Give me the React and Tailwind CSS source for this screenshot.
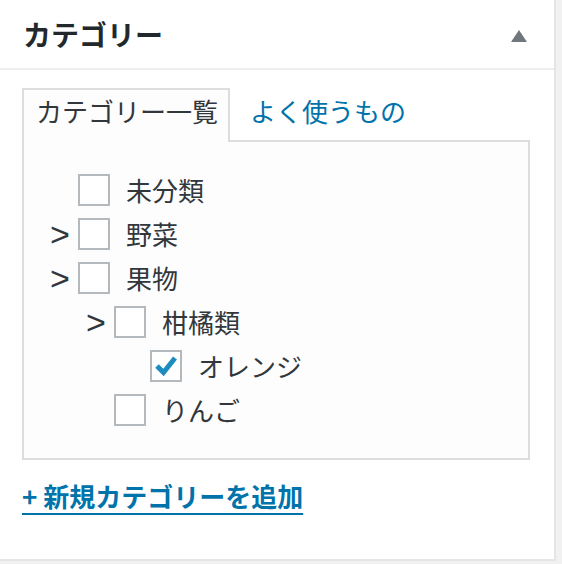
import React from "react";

const font = { fontFamily: '"Noto Sans CJK JP", "Noto Sans", sans-serif' };

const items = [
  { label: "未分類", level: 0, arrow: false, checked: false },
  { label: "野菜", level: 0, arrow: true, checked: false },
  { label: "果物", level: 0, arrow: true, checked: false },
  { label: "柑橘類", level: 1, arrow: true, checked: false },
  { label: "オレンジ", level: 2, arrow: false, checked: true },
  { label: "りんご", level: 1, arrow: false, checked: false },
];

const spacers = ["w-[26px]", "w-[62px]", "w-[98px]"];

const Checkbox = ({ checked }) => (
  <span className="flex h-[32px] w-[32px] shrink-0 items-center justify-center border-2 border-[#b4b9be] bg-white">
    {checked && (
      <svg width="28" height="28" viewBox="0 0 28 28">
        <polyline points="5,14 11.5,20.5 23,6" fill="none" stroke="#1e8cbe" strokeWidth="5" />
      </svg>
    )}
  </span>
);

const CategoryRow = ({ item }) => (
  <li className="flex h-[44px] items-center">
    <span className={spacers[item.level] + " shrink-0"} />
    <span className="w-[28px] shrink-0 text-[34px] leading-none text-[#32373c] [font-family:'Liberation_Sans',sans-serif]">
      {item.arrow ? ">" : ""}
    </span>
    <Checkbox checked={item.checked} />
    <span className="ml-[16px] text-[26px] leading-[36px] text-[#32373c]">{item.label}</span>
  </li>
);

export default function App() {
  return (
    <div className="h-[564px] w-full bg-[#f1f1f1]" style={font}>
      <div className="h-[561px] w-[556px] border-b-2 border-r-2 border-[#e5e5e5] bg-white">
        {/* header */}
        <div className="flex h-[70px] items-center justify-between border-b-2 border-[#eeeeee] pl-[23px] pr-[27px]">
          <h2 className="text-[28px] font-bold leading-[36px] text-[#23282d]">カテゴリー</h2>
          <svg className="mt-[4px]" width="16" height="12" viewBox="0 0 16 12">
            <polygon points="8,0 16,12 0,12" fill="#72777c" />
          </svg>
        </div>

        {/* body */}
        <div className="px-[22px] pt-[18px]">
          <div className="flex items-start">
            <div className="relative z-10 -mb-[2px] h-[54px] border-2 border-b-0 border-[#dddddd] bg-[#fdfdfd] pl-[12px] pr-[10px] pt-[3px]">
              <span className="block text-[26px] leading-[36px] text-[#32373c]">カテゴリー一覧</span>
            </div>
            <a href="#" className="ml-[20px] mt-[5px] block text-[26px] leading-[36px] text-[#0073aa]">
              よく使うもの
            </a>
          </div>
          <div className="h-[320px] w-[508px] border-2 border-[#dddddd] bg-[#fdfdfd] pt-[26px]">
            <ul>
              {items.map((item, i) => (
                <CategoryRow key={i} item={item} />
              ))}
            </ul>
          </div>
          <a
            href="#"
            className="mt-[18px] inline-block text-[26px] font-bold leading-[36px] text-[#0073aa] underline decoration-2 underline-offset-[6px]"
          >
            + 新規カテゴリーを追加
          </a>
        </div>
      </div>
    </div>
  );
}
